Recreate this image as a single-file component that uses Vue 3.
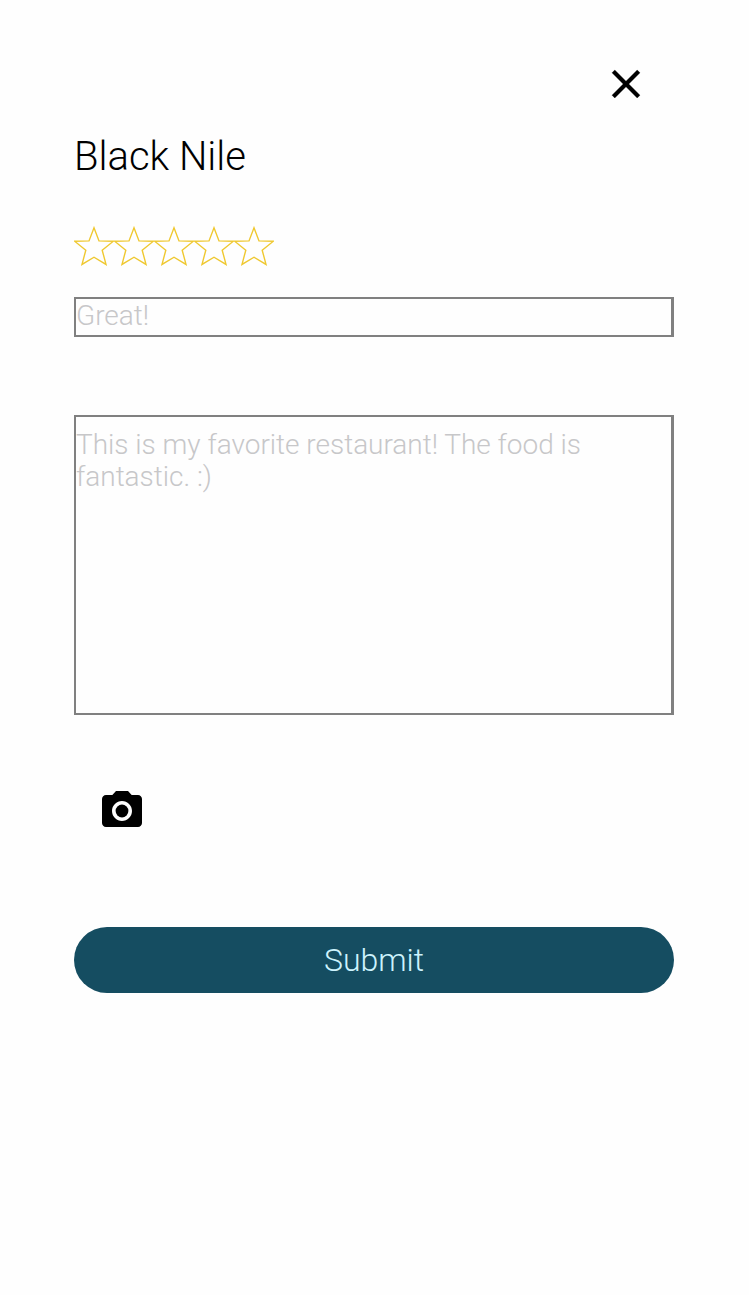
<script setup>
const stars = [1, 2, 3, 4, 5]
</script>

<template>
  <main class="page">
    <header class="top">
      <button class="close" aria-label="Close">
        <svg width="48" height="48" viewBox="0 0 24 24"><path d="M19 6.41 17.59 5 12 10.59 6.41 5 5 6.41 10.59 12 5 17.59 6.41 19 12 13.41 17.59 19 19 17.59 13.41 12z" stroke="#000" stroke-width=".15" /></svg>
      </button>
    </header>
    <h1 class="title">Black Nile</h1>
    <div class="stars">
      <svg v-for="s in stars" :key="s" width="40" height="40" viewBox="0 0 40 40">
        <path d="M20 1.8 25 14.9 39.4 15.2 28.2 24.2 32 38.4 20 31.2 8 38.4 11.8 24.2 .6 15.2 15 14.9Z" fill="none" stroke="#efc830" stroke-width="1.4" />
      </svg>
    </div>
    <div class="field headline">Great!</div>
    <div class="field body">This is my favorite restaurant! The food is<br />fantastic. :)</div>
    <svg class="camera" width="48" height="48" viewBox="0 0 24 24"><circle cx="12" cy="12" r="3.2" /><path d="M9 2 7.17 4H4c-1.1 0-2 .9-2 2v12c0 1.1.9 2 2 2h16c1.1 0 2-.9 2-2V6c0-1.1-.9-2-2-2h-3.17L15 2H9zm3 15c-2.76 0-5-2.24-5-5s2.24-5 5-5 5 2.24 5 5-2.24 5-5 5z" /></svg>
    <button class="submit">Submit</button>
  </main>
</template>

<style>
body { background: #fefefe; }
</style>

<style scoped>
.page {
  box-sizing: border-box;
  width: 749px;
  height: 1295px;
  padding: 60px 75px 0 74px;
  display: flex;
  flex-direction: column;
  font-family: Roboto, sans-serif;
  font-weight: 300;
  color: #000;
}
.top { display: flex; justify-content: flex-end; height: 48px; padding-right: 24px; }
.close { width: 48px; height: 48px; padding: 0; border: 0; background: none; }
svg { display: block; flex: none; }
.title { margin: 25px 0 0; font-size: 40px; line-height: 48px; font-weight: 300; }
.stars { display: flex; margin-top: 45px; }
.field {
  box-sizing: border-box;
  border: 2px solid #808080;
  border-right-width: 3px;
  color: #c7c7c9;
  font-size: 28px;
  line-height: 32px;
  letter-spacing: -0.02px;
  white-space: nowrap;
}
.headline { height: 40px; margin-top: 31px; padding-top: 1px; }
.body { height: 300px; margin-top: 78px; padding-top: 12px; }
.camera { margin: 72px 0 0 24px; }
.submit {
  height: 66px;
  margin-top: 92px;
  padding: 0;
  border: 0;
  border-radius: 33px;
  background: #154d61;
  color: #cdf3fd;
  font: 300 32px/66px Roboto, sans-serif;
}
</style>
